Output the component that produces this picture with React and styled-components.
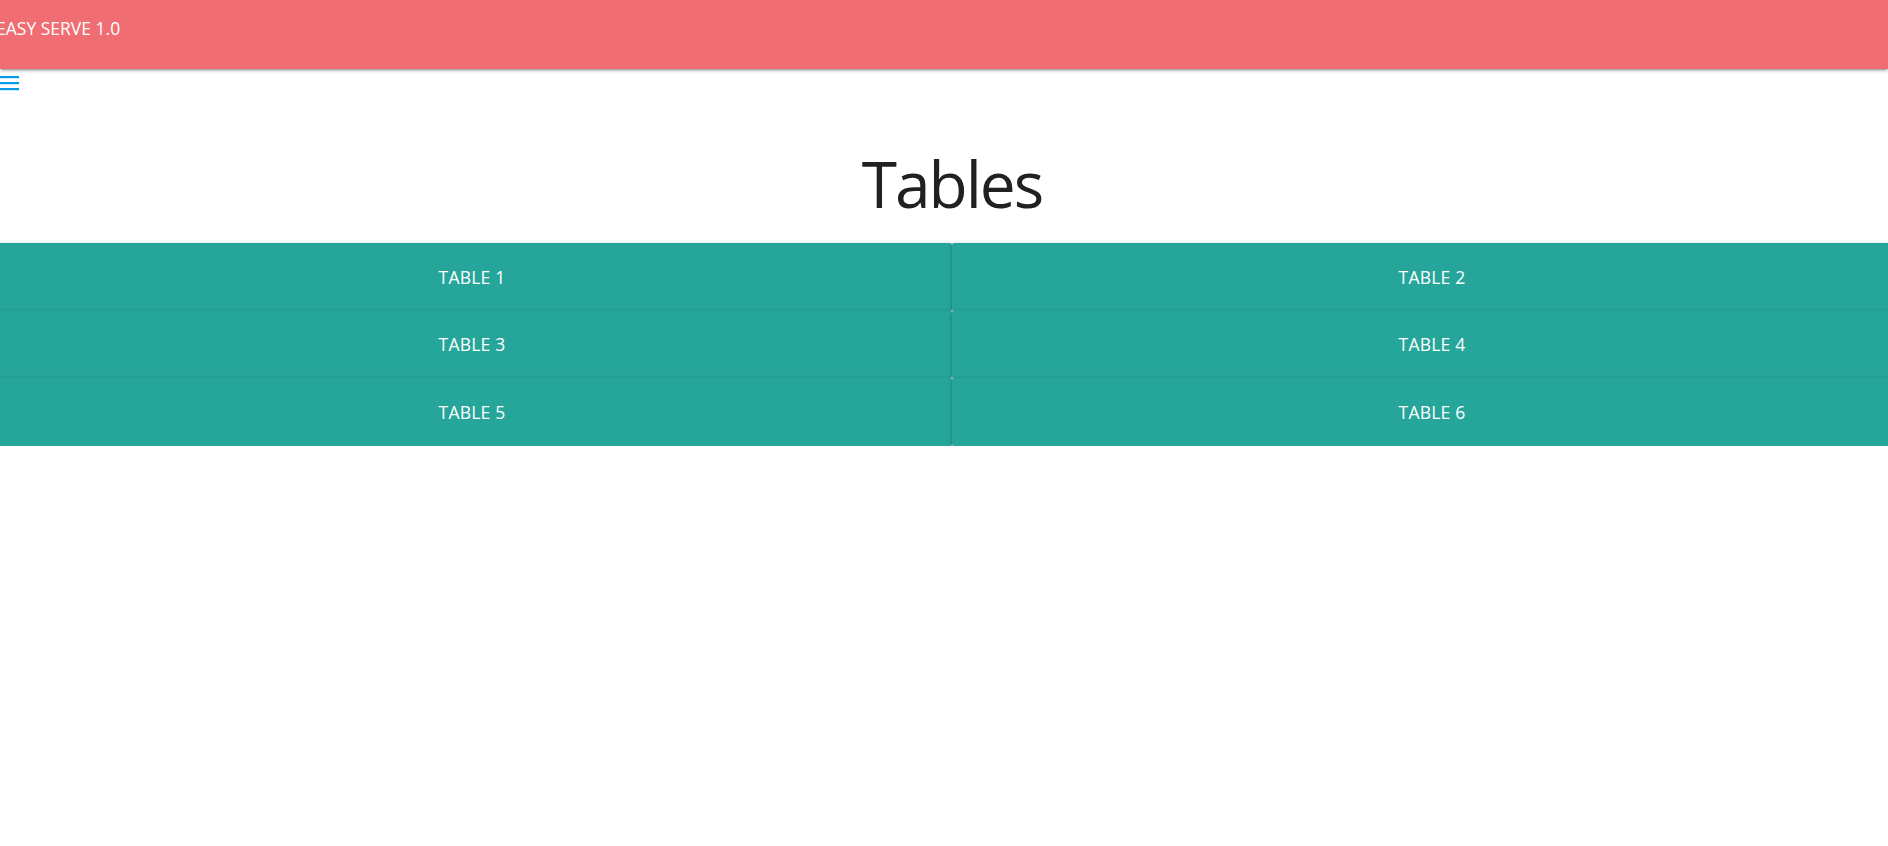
import React from "react";
import styled, { createGlobalStyle } from "styled-components";

const GlobalStyle = createGlobalStyle`
  html, body {
    margin: 0;
    padding: 0;
    background: #ffffff;
    overflow: hidden;
  }
  body {
    font-family: "Open Sans", "Noto Sans", sans-serif;
    color: rgba(0, 0, 0, 0.87);
  }
`;

const Page = styled.div`
  width: 1888px;
  overflow: hidden;
`;

const NavBar = styled.nav`
  height: 69px;
  background: #f06e73;
  box-shadow: 0 2px 2px 0 rgba(0, 0, 0, 0.14), 0 3px 1px -2px rgba(0, 0, 0, 0.12),
    0 1px 5px 0 rgba(0, 0, 0, 0.2);
  display: flex;
  align-items: flex-start;
  position: relative;
  z-index: 2;
`;

const Brand = styled.div`
  margin-left: -4px;
  margin-top: 16px;
  font-size: 17.5px;
  line-height: 24px;
  color: #ffffff;
  white-space: nowrap;
`;

const MenuRow = styled.div`
  height: 24px;
  display: flex;
  align-items: center;
`;

const MenuIcon = styled.svg`
  display: block;
  margin-left: -2px;
  width: 22px;
  height: 24px;
`;

// the content area is wider than the window and sits a little to the left
const Content = styled.main`
  margin-left: -8px;
  width: 1920px;
`;

const Title = styled.h3`
  margin: 56px 0 24px;
  font-size: 64px;
  line-height: 70px;
  letter-spacing: -2px;
  font-weight: 400;
  text-align: center;
  color: #212121;
`;

const Grid = styled.div`
  display: grid;
  grid-template-columns: 1fr 1fr;
`;

const TableButton = styled.button`
  height: 67.5px;
  border: none;
  border-radius: 2px;
  background: #26a69a;
  color: #ffffff;
  font-family: "Open Sans", "Noto Sans", sans-serif;
  font-size: 17.5px;
  letter-spacing: 0.2px;
  text-transform: uppercase;
  box-shadow: 0 2px 2px 0 rgba(0, 0, 0, 0.14), 0 3px 1px -2px rgba(0, 0, 0, 0.12),
    0 1px 5px 0 rgba(0, 0, 0, 0.2);
  cursor: pointer;
  padding: 0;
`;

const tables = [1, 2, 3, 4, 5, 6];

export default function App() {
  return (
    <Page>
      <GlobalStyle />
      <NavBar>
        <Brand>EASY SERVE 1.0</Brand>
      </NavBar>
      <MenuRow>
        <MenuIcon viewBox="0 0 22 24">
          <g fill="#039be5">
            <rect x="0" y="7" width="21" height="2.2" />
            <rect x="0" y="13" width="21" height="2.2" />
            <rect x="0" y="19" width="21" height="2.2" />
          </g>
        </MenuIcon>
      </MenuRow>
      <Content>
        <Title>Tables</Title>
        <Grid>
          {tables.map((n) => (
            <TableButton key={n}>Table {n}</TableButton>
          ))}
        </Grid>
      </Content>
    </Page>
  );
}
